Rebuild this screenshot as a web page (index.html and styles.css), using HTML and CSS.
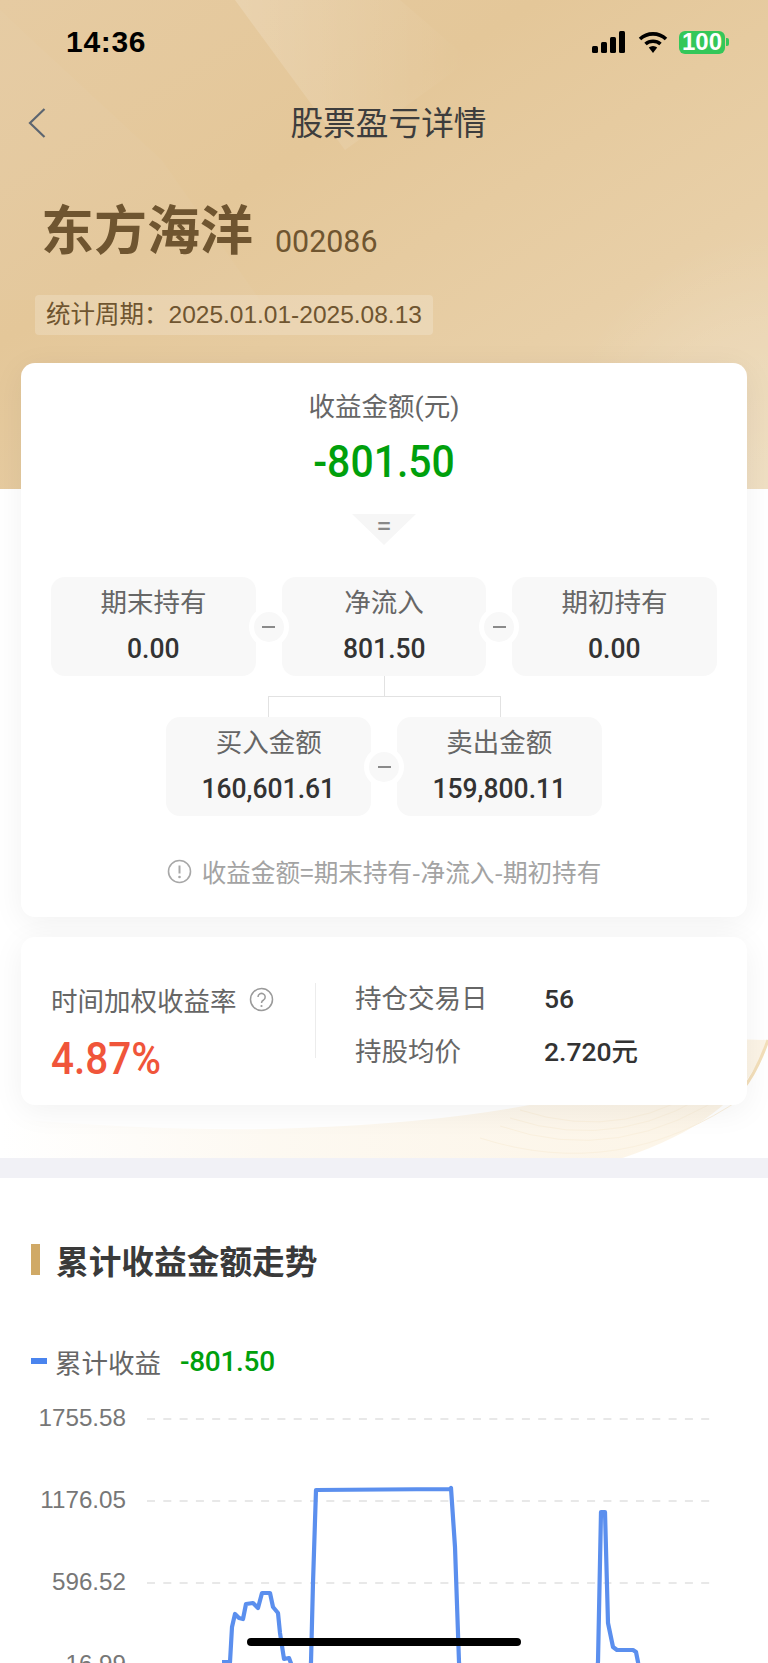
FILE: index.html
```html
<!DOCTYPE html>
<html lang="zh-CN">
<head>
<meta charset="utf-8">
<title>股票盈亏详情</title>
<link rel="stylesheet" href="styles.css">
</head>
<body>
<div class="phone">
  <div class="top">
    <svg class="hero-bg" viewBox="0 0 768 489" preserveAspectRatio="none" aria-hidden="true">
      <defs>
        <linearGradient id="heroBase" x1="0" y1="0" x2="1" y2="1">
          <stop offset="0" stop-color="#e6cba2"/>
          <stop offset=".35" stop-color="#e4c799"/>
          <stop offset=".7" stop-color="#e8cfa7"/>
          <stop offset="1" stop-color="#ecd9b8"/>
        </linearGradient>
        <linearGradient id="wedge" x1="0" y1="0" x2="1" y2="0">
          <stop offset="0" stop-color="#fff" stop-opacity=".17"/>
          <stop offset="1" stop-color="#fff" stop-opacity="0"/>
        </linearGradient>
        <radialGradient id="corner" cx="1" cy="1" r=".95">
          <stop offset="0" stop-color="#fff" stop-opacity=".16"/>
          <stop offset=".6" stop-color="#fff" stop-opacity=".1"/>
          <stop offset="1" stop-color="#fff" stop-opacity="0"/>
        </radialGradient>
      </defs>
      <rect width="768" height="489" fill="url(#heroBase)"/>
      <polygon points="235,0 400,0 470,60 345,150" fill="url(#wedge)"/>
      <polygon points="0,10 162,160 260,300 0,300" fill="#fff" fill-opacity=".03"/>
      <polygon points="768,220 620,230 540,303 660,489 768,489" fill="url(#corner)"/>
    </svg>
    <svg class="wave-bg" viewBox="0 0 768 140" aria-hidden="true">
      <defs>
        <linearGradient id="waveFade" x1="0" y1="0" x2="1" y2="0">
          <stop offset="0" stop-color="#fbf3e4" stop-opacity="0"/>
          <stop offset=".35" stop-color="#fbf3e4" stop-opacity=".5"/>
          <stop offset=".75" stop-color="#fcf4e6" stop-opacity=".85"/>
          <stop offset="1" stop-color="#fcf4e6" stop-opacity="1"/>
        </linearGradient>
      </defs>
      <path d="M768 22 C745 85 690 122 590 150 L0 150 L0 100 Q180 115 300 110 Q440 105 540 85 L700 20 Z" fill="url(#waveFade)"/>
      <g class="wave-lines">
        <path d="M500 108 Q620 150 735 70"/>
        <path d="M510 100 Q625 138 728 62"/>
        <path d="M520 92 Q630 128 722 56"/>
        <path d="M480 120 Q620 165 745 78"/>
      </g>
      <path class="wave-edge" d="M768 22 C760 45 752 60 742 72"/>
    </svg>

    <div class="status">
      <span class="time">14:36</span>
      <div class="status-icons">
        <svg class="ic-signal" viewBox="0 0 34 22" aria-hidden="true">
          <rect x="0" y="15" width="6" height="7" rx="1.5"/>
          <rect x="9" y="11" width="6" height="11" rx="1.5"/>
          <rect x="18" y="6" width="6" height="16" rx="1.5"/>
          <rect x="27" y="0" width="6" height="22" rx="1.5"/>
        </svg>
        <svg class="ic-wifi" viewBox="0 0 30 22" aria-hidden="true">
          <path d="M2 8 A19 19 0 0 1 28 8" fill="none" stroke="#000" stroke-width="3.6"/>
          <path d="M7.5 13 A11.5 11.5 0 0 1 22.5 13" fill="none" stroke="#000" stroke-width="3.6"/>
          <path d="M10.8 16.6 A6.2 6.2 0 0 1 19.2 16.6 L15 22 Z"/>
        </svg>
        <div class="battery"><span class="battery-num">100</span></div>
        <span class="battery-nub"></span>
      </div>
    </div>

    <div class="nav">
      <svg class="back" viewBox="0 0 18 30" aria-hidden="true">
        <path d="M16.5 1 L2 15 L16.5 29" fill="none" stroke="#5c6570" stroke-width="2.2"/>
      </svg>
      <span class="nav-title">股票盈亏详情</span>
    </div>

    <div class="stock">
      <span class="stock-name">东方海洋</span>
      <span class="stock-code">002086</span>
    </div>
    <div class="period">统计周期：2025.01.01-2025.08.13</div>

    <section class="card card-main">
      <div class="main-label">收益金额(元)</div>
      <div class="main-value">-801.50</div>
      <div class="equals">=</div>

      <div class="row row-three">
        <div class="box"><div class="box-label">期末持有</div><div class="box-value">0.00</div></div>
        <div class="op"><span class="op-dash"></span></div>
        <div class="box"><div class="box-label">净流入</div><div class="box-value">801.50</div></div>
        <div class="op"><span class="op-dash"></span></div>
        <div class="box"><div class="box-label">期初持有</div><div class="box-value">0.00</div></div>
      </div>

      <div class="link"><div class="link-stem"></div><div class="link-bar"></div></div>

      <div class="row row-two">
        <div class="box"><div class="box-label">买入金额</div><div class="box-value">160,601.61</div></div>
        <div class="op"><span class="op-dash"></span></div>
        <div class="box"><div class="box-label">卖出金额</div><div class="box-value">159,800.11</div></div>
      </div>

      <div class="hint">
        <svg class="hint-icon" viewBox="0 0 25 25" aria-hidden="true">
          <circle cx="12.5" cy="12.5" r="11" fill="none" stroke="#a8a8a8" stroke-width="1.6"/>
          <path d="M12.5 6.5 V14.5" stroke="#a8a8a8" stroke-width="2" fill="none"/>
          <circle cx="12.5" cy="18" r="1.3" fill="#a8a8a8"/>
        </svg>
        <span>收益金额=期末持有-净流入-期初持有</span>
      </div>
    </section>

    <section class="card card-stats">
      <div class="stat-left">
        <div class="stat-head">
          <span>时间加权收益率</span>
          <svg class="q-icon" viewBox="0 0 25 25" aria-hidden="true">
            <circle cx="12.5" cy="12.5" r="11" fill="none" stroke="#9a9a9a" stroke-width="1.5"/>
            <path d="M9 10 A3.6 3.6 0 1 1 14.6 13 Q12.5 14.2 12.5 16" fill="none" stroke="#9a9a9a" stroke-width="1.5"/>
            <circle cx="12.5" cy="19" r="1.1" fill="#9a9a9a"/>
          </svg>
        </div>
        <div class="stat-rate">4.87%</div>
      </div>
      <div class="divider"></div>
      <div class="stat-grid">
        <span class="stat-key">持仓交易日</span><span class="stat-val">56</span>
        <span class="stat-key">持股均价</span><span class="stat-val">2.720元</span>
      </div>
    </section>
  </div>

  <div class="sep"></div>

  <section class="trend">
    <h2 class="trend-title"><span class="trend-bar"></span>累计收益金额走势</h2>
    <div class="legend">
      <span class="legend-mark"></span>
      <span class="legend-name">累计收益</span>
      <span class="legend-value">-801.50</span>
    </div>
    <svg class="chart" viewBox="0 1376 768 320" aria-label="累计收益金额走势图">
      <g class="grid">
        <line x1="147" y1="1419" x2="714" y2="1419"/>
        <line x1="147" y1="1501" x2="714" y2="1501"/>
        <line x1="147" y1="1583" x2="714" y2="1583"/>
        <line x1="147" y1="1665" x2="714" y2="1665"/>
      </g>
      <g class="axis">
        <text x="126" y="1425.5">1755.58</text>
        <text x="126" y="1507.5">1176.05</text>
        <text x="126" y="1589.5">596.52</text>
        <text x="126" y="1671.5">16.99</text>
      </g>
      <path class="series" d="M222 1662 H226 L230 1662 L232 1627 L235 1614 L239 1618 L243 1619 L246 1604 L253 1603 L258 1608 L262 1593 L270 1593 L273 1607 L278 1613 L280 1633 L284 1659 L289 1658 L292 1666 L300 1690 L309 1690 L311 1662 L313 1583 L316 1490 L450 1489 L451 1488 L455 1547 L459 1662 L462 1690 L594 1690 L598 1662 L601 1512 L605 1512 L608 1623 L613 1647 L617 1650 L633 1650 L636 1652 L638 1662 L642 1690"/>
    </svg>
  </section>

  <div class="home-bar"></div>
</div>
</body>
</html>
```

FILE: styles.css
```css
* { box-sizing: border-box; }

html, body {
  margin: 0;
  padding: 0;
  height: 1663px;
  overflow: hidden;
  background: #fff;
}

body {
  font-family: Roboto, "Noto Sans CJK SC", sans-serif;
  color: #333;
}

.phone {
  position: relative;
  width: 768px;
  height: 1663px;
  overflow: hidden;
  background: #fff;
}

.top {
  position: relative;
  height: 1158px;
  background: #fff;
}

.hero-bg {
  position: absolute;
  left: 0;
  top: 0;
  width: 768px;
  height: 489px;
}

.wave-bg {
  position: absolute;
  left: 0;
  top: 1018px;
  width: 768px;
  height: 140px;
}

.wave-lines path {
  fill: none;
  stroke: #faf0de;
  stroke-width: 1;
}

.wave-edge {
  fill: none;
  stroke: #f3dfba;
  stroke-width: 3;
}

/* Status bar */
.status {
  position: relative;
  height: 84px;
  display: flex;
  align-items: center;
  justify-content: space-between;
  padding: 0 39px 0 66px;
}

.time {
  font-family: "Liberation Sans", sans-serif;
  font-size: 30px;
  font-weight: 700;
  letter-spacing: .7px;
  color: #000;
}

.status-icons {
  display: flex;
  align-items: center;
}

.ic-signal {
  width: 34px;
  height: 22px;
  fill: #000;
  margin-right: 12px;
}

.ic-wifi {
  width: 30px;
  height: 22px;
  fill: #000;
  margin-right: 11px;
}

.battery {
  width: 46px;
  height: 23px;
  border-radius: 6px;
  background: #34c759;
  display: flex;
  align-items: center;
  justify-content: center;
}

.battery-num {
  font-family: "Liberation Sans", sans-serif;
  font-size: 24px;
  font-weight: 700;
  color: #fff;
}

.battery-nub {
  width: 3px;
  height: 8px;
  margin-left: 1px;
  border-radius: 0 2px 2px 0;
  background: #34c759;
}

/* Nav */
.nav {
  position: relative;
  height: 76px;
  padding: 4px 0 0 9px;
  display: flex;
  align-items: center;
  justify-content: center;
}

.back {
  position: absolute;
  left: 28px;
  top: 24px;
  width: 18px;
  height: 30px;
}

.nav-title {
  font-size: 32.7px;
  color: #3d3d3d;
  line-height: 1;
}

/* Stock heading */
.stock {
  position: relative;
  display: flex;
  align-items: baseline;
  height: 70px;
  margin-top: 36px;
  padding-left: 41px;
  line-height: 72px;
  color: #6f5530;
}

.stock-name {
  font-size: 53px;
  font-weight: 700;
}

.stock-code {
  display: inline-block;
  margin-left: 22px;
  font-size: 32px;
  transform: translateY(2px) scaleX(.95);
  transform-origin: left bottom;
}

.period {
  position: relative;
  width: 398px;
  height: 40px;
  margin: 29px 0 0 35px;
  padding-left: 11px;
  border-radius: 4px;
  background: rgba(255, 255, 255, .2);
  font-family: "Liberation Sans", "Noto Sans CJK SC", sans-serif;
  font-size: 24.5px;
  line-height: 40px;
  color: #6f5530;
  white-space: nowrap;
}

/* Cards */
.card {
  position: relative;
  margin: 0 21px;
  background: #fff;
  border-radius: 14px;
  box-shadow: 0 6px 32px rgba(0, 0, 0, .06);
}

.card-main {
  height: 554px;
  margin-top: 28px;
  padding-top: 26px;
  text-align: center;
}

.main-label {
  height: 36px;
  font-size: 26.5px;
  line-height: 36px;
  color: #666;
}

.main-value {
  height: 60px;
  margin-top: 7px;
  font-size: 44px;
  font-weight: 500;
  line-height: 60px;
  color: #00a00c;
  transform: scaleX(.93);
}

.equals {
  width: 64px;
  height: 31px;
  margin: 22px auto 0;
  background: #f6f6f6;
  clip-path: polygon(0 0, 100% 0, 50% 100%);
  font-size: 28px;
  line-height: 24px;
  color: #888;
}

.row {
  display: flex;
  justify-content: center;
}

.row-three {
  margin-top: 32px;
}

.box {
  width: 204.6px;
  height: 99px;
  padding-top: 8px;
  border-radius: 14px;
  background: #f8f8f8;
}

.box-label {
  height: 36px;
  font-size: 26.5px;
  line-height: 36px;
  color: #666;
}

.box-value {
  height: 36px;
  margin-top: 10px;
  font-size: 28px;
  font-weight: 500;
  line-height: 36px;
  color: #333;
  transform: scaleX(.945);
}

.op {
  position: relative;
  z-index: 1;
  flex: none;
  width: 40px;
  height: 40px;
  margin: 0 -7px;
  align-self: center;
  display: flex;
  align-items: center;
  justify-content: center;
  border: 5px solid #fff;
  border-radius: 50%;
  background: #f8f8f8;
}

.op-dash {
  width: 13px;
  height: 2px;
  background: #8a8a8a;
}

.link {
  width: 233px;
  height: 41px;
  margin: 0 auto;
}

.link-stem {
  width: 1px;
  height: 20px;
  margin: 0 auto;
  background: #e2e2e2;
}

.link-bar {
  height: 21px;
  border: 1px solid #e2e2e2;
  border-bottom: 0;
}

.hint {
  display: flex;
  align-items: center;
  justify-content: center;
  gap: 10px;
  margin-top: 38px;
  height: 34px;
  font-family: "Noto Sans CJK SC", sans-serif;
  font-size: 24.6px;
  color: #a3a3a3;
}

.hint-icon {
  width: 25px;
  height: 25px;
}

.card-stats {
  display: flex;
  align-items: flex-start;
  height: 168px;
  margin-top: 20px;
  padding: 44px 0 0 30px;
}

.stat-left {
  width: 264px;
}

.stat-head {
  display: flex;
  align-items: center;
  gap: 12px;
  height: 36px;
  font-size: 26.5px;
  color: #666;
}

.q-icon {
  width: 25px;
  height: 25px;
}

.stat-rate {
  margin-top: 12px;
  height: 60px;
  font-size: 44px;
  font-weight: 500;
  line-height: 60px;
  color: #f0553a;
  transform: scaleX(.92);
  transform-origin: left center;
}

.divider {
  flex: none;
  width: 1px;
  height: 75px;
  margin-top: 2px;
  background: #ececec;
}

.stat-grid {
  display: grid;
  grid-template-columns: 189px auto;
  grid-auto-rows: 53px;
  margin: -9px 0 0 39px;
  line-height: 53px;
}

.stat-key {
  font-size: 26.5px;
  color: #666;
}

.stat-val {
  font-size: 26.5px;
  font-weight: 500;
  color: #333;
}

.sep {
  height: 20px;
  background: #f1f1f6;
}

/* Trend */
.trend {
  padding-top: 66px;
  background: #fff;
}

.trend-title {
  display: flex;
  align-items: center;
  height: 31px;
  margin: 0 0 0 31px;
  font-size: 32.7px;
  font-weight: 700;
  color: #3a3a3a;
}

.trend-bar {
  width: 9px;
  height: 31px;
  margin-right: 16px;
  background: #d0a966;
}

.legend {
  display: flex;
  align-items: center;
  height: 30px;
  margin: 71px 0 0 31px;
}

.legend-mark {
  width: 16px;
  height: 6px;
  margin-right: 8px;
  background: #4a84ee;
}

.legend-name {
  margin-right: 19px;
  font-size: 26.5px;
  color: #666;
}

.legend-value {
  font-size: 28px;
  font-weight: 500;
  letter-spacing: -.3px;
  color: #00a00c;
}

.chart {
  display: block;
  width: 768px;
  height: 320px;
}

.grid line {
  stroke: #e8e8e8;
  stroke-width: 2;
  stroke-dasharray: 8 8.3;
}

.axis text {
  font-family: "Liberation Sans", sans-serif;
  font-size: 24.2px;
  fill: #777;
  text-anchor: end;
}

.series {
  fill: none;
  stroke: #5b8fee;
  stroke-width: 4.2;
  stroke-linejoin: round;
}

.home-bar {
  position: absolute;
  left: 247px;
  top: 1638px;
  width: 274px;
  height: 8px;
  border-radius: 4px;
  background: #000;
}
```
